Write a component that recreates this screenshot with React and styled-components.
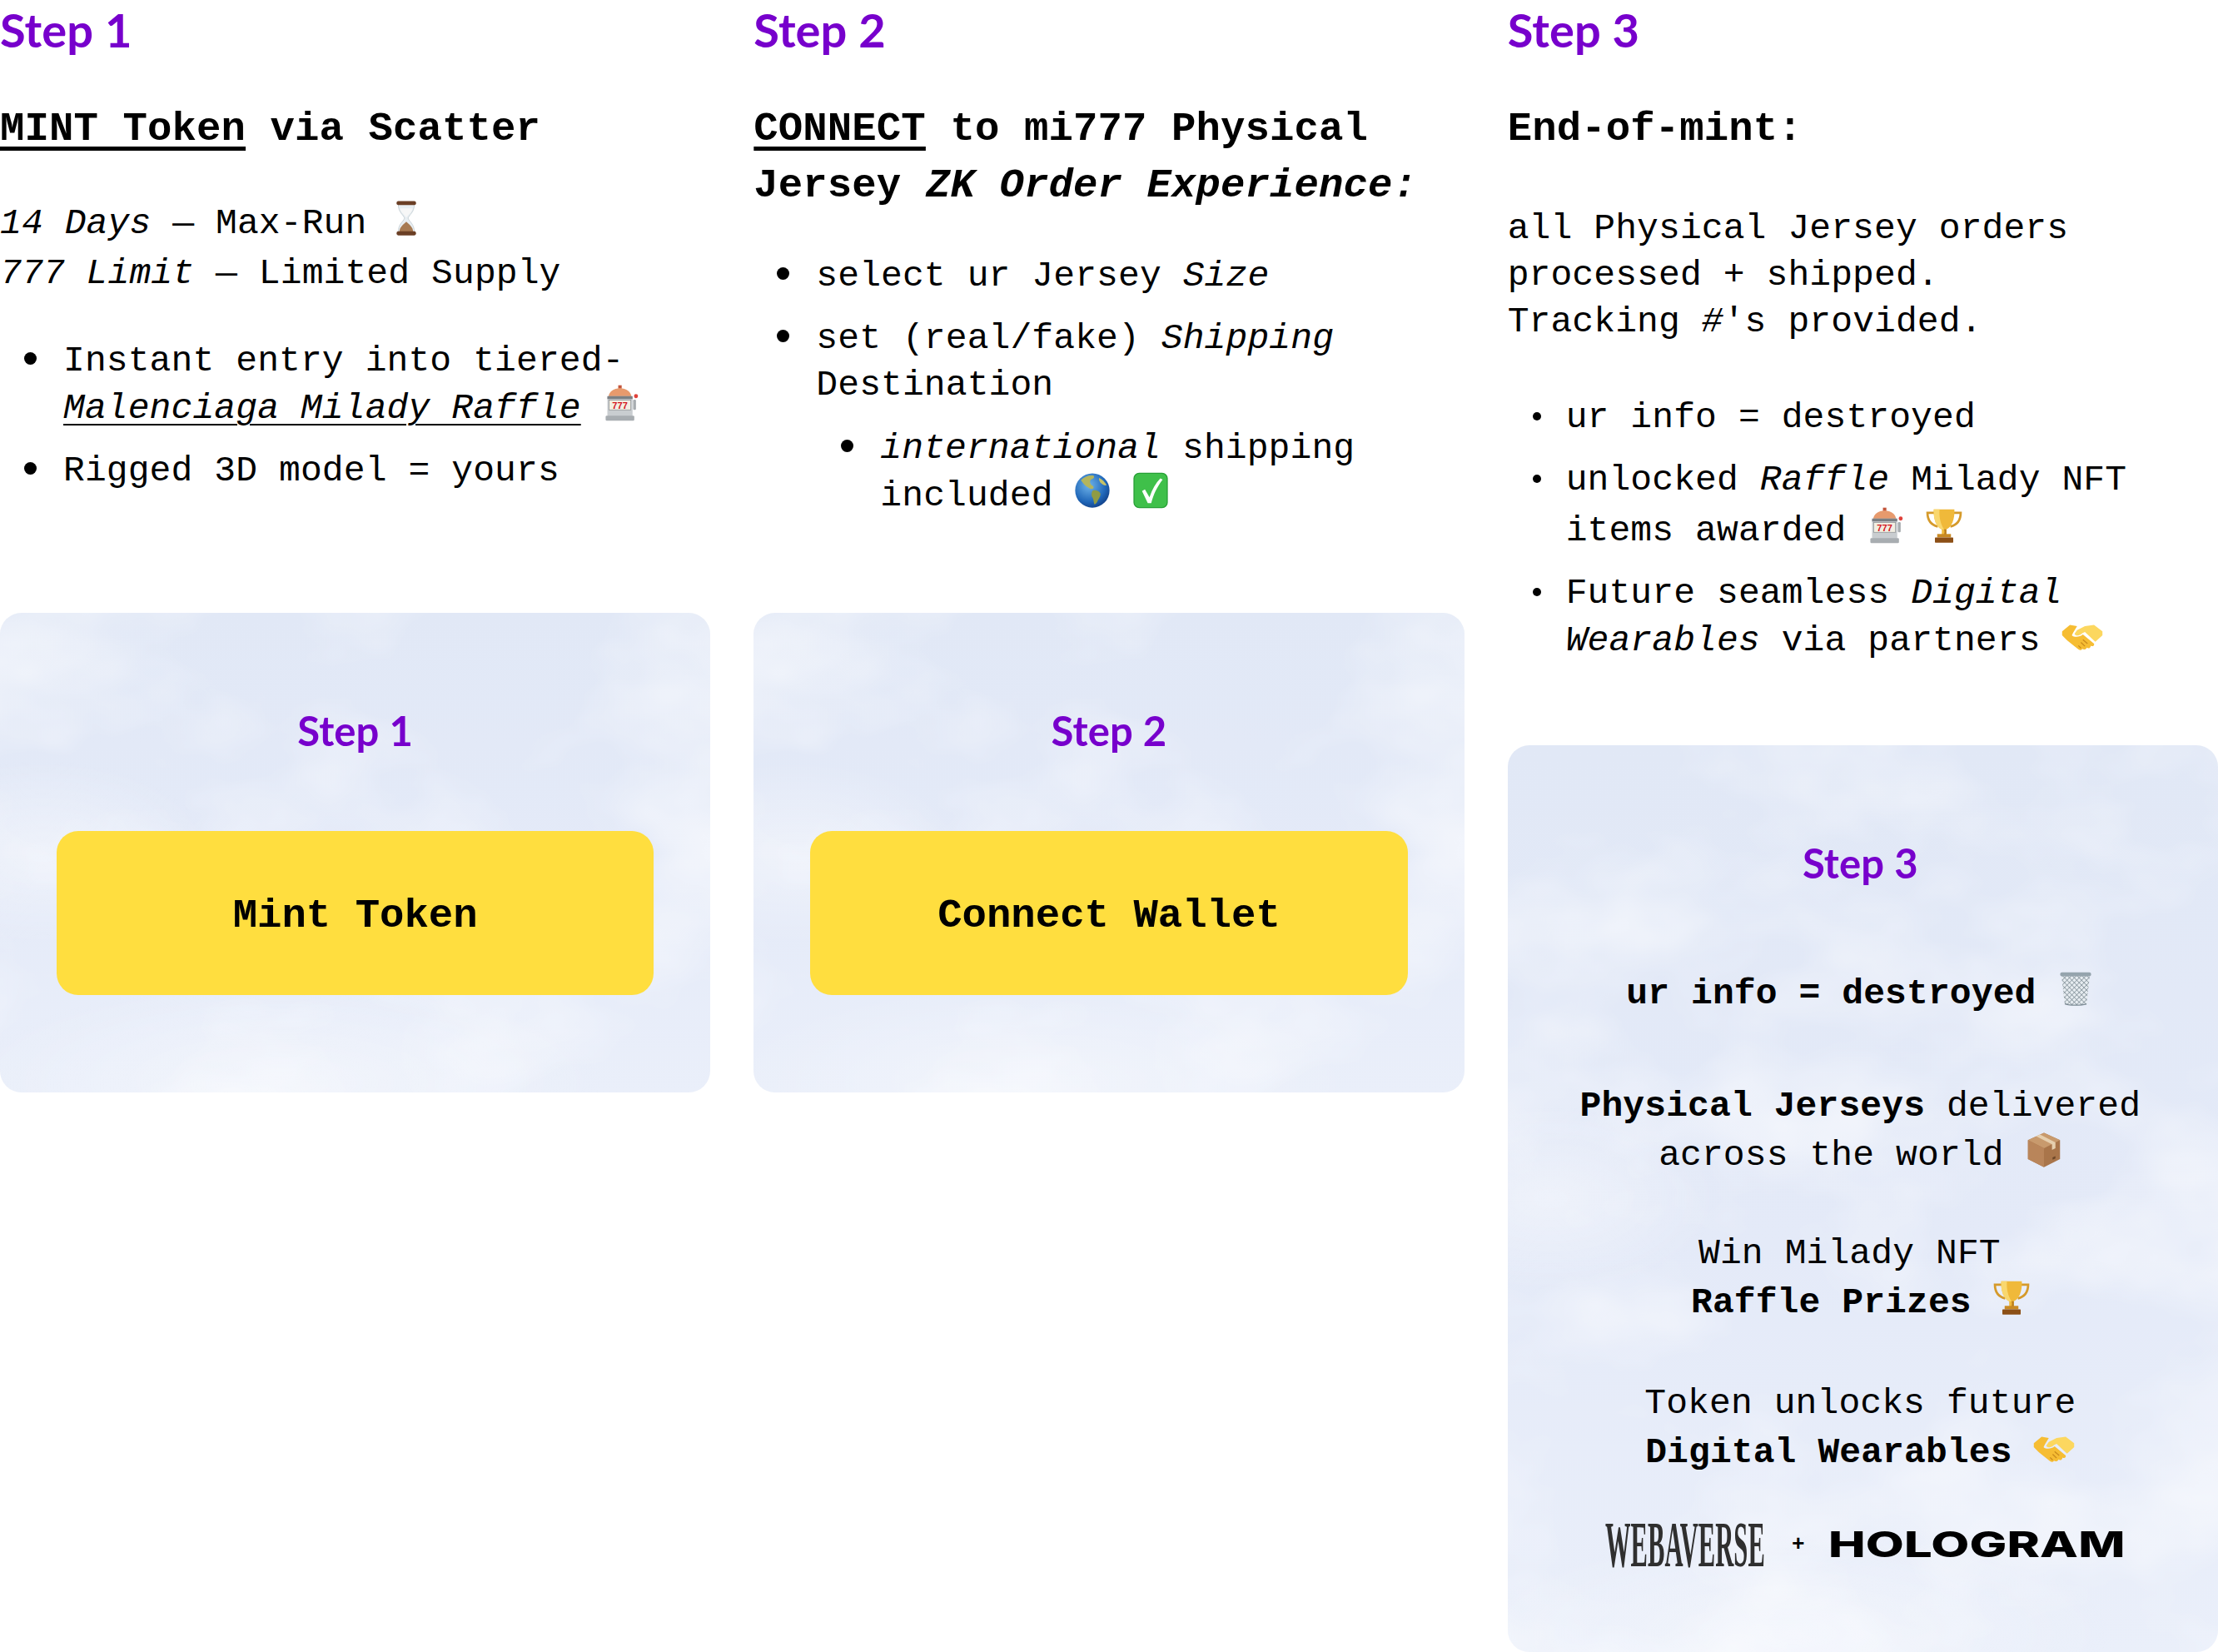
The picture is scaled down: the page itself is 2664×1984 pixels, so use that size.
import React from "react";
import styled, { createGlobalStyle, css } from "styled-components";

const GlobalStyle = createGlobalStyle`
  html, body {
    margin: 0;
    padding: 0;
    background: #ffffff;
  }
  body {
    font-family: "Liberation Mono", "DejaVu Sans Mono", monospace;
    color: #000000;
    letter-spacing: 0.1px;
  }
`;

const clouds = css`
  background-color: #e4eaf7;
  background-image:
    radial-gradient(ellipse 200px 110px at 6% 50%, rgba(255, 255, 255, 0.4), transparent),
    radial-gradient(ellipse 380px 120px at 40% 98%, rgba(255, 255, 255, 0.4), transparent),
    linear-gradient(180deg, #e1e8f6 0%, #e4eaf8 55%, #eaeffa 100%);
`;

const Page = styled.div`
  display: grid;
  grid-template-columns: repeat(3, 1fr);
  column-gap: 52px;
  width: 2664px;
  height: 1984px;
  overflow: hidden;
`;

const Column = styled.section`
  display: flex;
  flex-direction: column;
`;

const Intro = styled.div`
  height: ${(p) => p.$height}px;
  flex: none;
`;

const StepTitle = styled.h3`
  position: relative;
  margin: 0;
  font-family: "Comic Sans MS", "Lato", sans-serif;
  font-weight: 700;
  font-size: ${(p) => (p.$small ? 49 : 56)}px;
  line-height: ${(p) => (p.$small ? 60 : 72)}px;
  color: #7700cc;
  text-align: ${(p) => (p.$center ? "center" : "left")};
`;

const Heading = styled.h2`
  margin: 49px 0 0;
  font-size: 49px;
  line-height: 68px;
  font-weight: 700;
  u {
    text-decoration-thickness: 5px;
    text-underline-offset: 8px;
  }
`;

const Body = styled.p`
  margin: ${(p) => p.$top}px 0 0;
  font-size: 43px;
  line-height: ${(p) => p.$line || 56}px;
`;

const List = styled.ul`
  margin: ${(p) => p.$top || 0}px 0 0;
  padding: 0 0 0 ${(p) => p.$indent || 76}px;
  list-style: none;
  font-size: 43px;
  line-height: 56px;
  > li {
    position: relative;
    margin-top: 19px;
  }
  > li::before {
    content: "";
    position: absolute;
    left: ${(p) => (p.$smallDots ? -40 : -47)}px;
    top: ${(p) => (p.$smallDots ? 21 : 17)}px;
    width: ${(p) => (p.$smallDots ? 10 : 15)}px;
    height: ${(p) => (p.$smallDots ? 10 : 15)}px;
    border-radius: 50%;
    background: #000000;
  }
  u {
    text-decoration-thickness: 2px;
    text-underline-offset: 7px;
  }
`;

const SubList = styled(List)`
  padding-left: 77px;
  > li {
    margin-top: 20px;
  }
`;

const Card = styled.div`
  ${clouds}
  position: relative;
  overflow: hidden;
  border-radius: 26px;
  box-sizing: border-box;
  flex: 1;
  padding: ${(p) => p.$pad || "111px 68px 117px"};
  display: flex;
  flex-direction: column;
`;

const ShortCard = styled(Card)`
  flex: none;
  height: 576px;
`;

const CloudSvg = styled.svg`
  position: absolute;
  inset: 0;
  width: 100%;
  height: 100%;
`;

const MintButton = styled.button`
  position: relative;
  margin-top: 91px;
  padding: 6px 0 0;
  height: 197px;
  width: 100%;
  border: 0;
  border-radius: 26px;
  background: #ffde3f;
  color: #000000;
  font-family: "Liberation Mono", monospace;
  font-size: 49px;
  font-weight: 700;
`;

const Note = styled.p`
  position: relative;
  margin: ${(p) => p.$top}px 0 0;
  text-align: center;
  font-size: 43px;
  line-height: 59px;
`;

const Logos = styled.div`
  position: relative;
  display: flex;
  align-items: center;
  justify-content: center;
  margin: 51px 0 0 6px;
  height: 60px;
`;

const Webaverse = styled.span`
  display: block;
  width: 188px;
  font-family: "Liberation Serif", serif;
  font-weight: 700;
  font-size: 78px;
  line-height: 60px;
  color: #2f2f2f;
  white-space: nowrap;
  transform: scaleX(0.392);
  transform-origin: left center;
`;

const Plus = styled.span`
  font-size: 26px;
  font-weight: 700;
  margin: 0 28px 0 36px;
`;

const Hologram = styled.span`
  display: block;
  width: 351px;
  font-family: "Inter", sans-serif;
  font-weight: 800;
  font-size: 42px;
  line-height: 60px;
  color: #000000;
  white-space: nowrap;
  transform: scaleX(1.42);
  transform-origin: left center;
`;

const EmojiSvg = styled.svg`
  display: inline-block;
  width: ${(p) => p.$size || 44}px;
  height: ${(p) => p.$size || 44}px;
  vertical-align: ${(p) => p.$drop || -4}px;
  margin-top: ${(p) => p.$lift || 0}px;
`;

const Clouds = ({ seed }) => (
  <CloudSvg aria-hidden="true">
    <filter id={`cloud${seed}`} x="0" y="0" width="100%" height="100%">
      <feTurbulence type="fractalNoise" baseFrequency="0.004 0.006" numOctaves="4" seed={seed} />
      <feColorMatrix values="0 0 0 0 1  0 0 0 0 1  0 0 0 0 1  1.3 0 0 0 -0.58" />
    </filter>
    <rect width="100%" height="100%" filter={`url(#cloud${seed})`} />
  </CloudSvg>
);

const Hourglass = () => (
  <EmojiSvg viewBox="0 0 64 64">
    <path d="M18 8h28c0 14-9 18-11 24 2 6 11 10 11 24H18c0-14 9-18 11-24-2-6-11-10-11-24z" fill="#e8eef2" stroke="#b9c3c9" strokeWidth="1" />
    <path d="M21 15h22c-2 8-8 11-11 16-3-5-9-8-11-16z" fill="#f7f7f7" />
    <path d="M20 56c0-9 7-13 12-18 5 5 12 9 12 18z" fill="#a77a52" />
    <rect x="15" y="2" width="34" height="7" rx="3" fill="#6b3f25" />
    <rect x="15" y="55" width="34" height="7" rx="3" fill="#6b3f25" />
  </EmojiSvg>
);

const Slot = ({ lift }) => (
  <EmojiSvg viewBox="0 0 64 64" $lift={lift}>
    <rect x="27" y="1" width="6" height="6" fill="#c4553a" />
    <path d="M10 22c0-10 9-16 20-16s20 6 20 16z" fill="#e79a6d" />
    <rect x="8" y="20" width="44" height="36" rx="3" fill="#c9cdd0" />
    <rect x="8" y="20" width="44" height="5" fill="#7b7f83" />
    <rect x="11" y="27" width="38" height="17" fill="#f3efe2" stroke="#8a8d90" strokeWidth="1" />
    <text x="30" y="42" textAnchor="middle" fontFamily="Liberation Sans" fontWeight="700" fontSize="16" fill="#d3141c">777</text>
    <rect x="5" y="54" width="50" height="9" rx="2" fill="#a8adb1" />
    <rect x="53" y="26" width="5" height="18" rx="2" fill="#a8adb1" />
    <circle cx="58" cy="20" r="3.5" fill="#e0413a" />
  </EmojiSvg>
);

const Globe = () => (
  <EmojiSvg viewBox="0 0 64 64">
    <defs>
      <radialGradient id="sea" cx="40%" cy="35%" r="70%">
        <stop offset="0%" stopColor="#6fb4ea" />
        <stop offset="70%" stopColor="#1f66b8" />
        <stop offset="100%" stopColor="#123f86" />
      </radialGradient>
    </defs>
    <circle cx="32" cy="32" r="30" fill="url(#sea)" />
    <path d="M12 14c6-6 14-9 22-8 3 3-1 6-5 7-2 4-1 7 1 9 3 2 5 3 4 6-3 3-6 1-9-1-5-3-9-7-13-13z" fill="#b4b55c" />
    <path d="M33 32c5-1 11 1 13 5 1 5-3 9-5 14-2 4-5 7-6 4-1-6-1-9-4-13-1-4 0-8 2-10z" fill="#8f9b45" />
    <path d="M44 10c5 2 10 7 13 13-4 1-8-2-11-5-2-3-3-6-2-8z" fill="#c6c268" />
  </EmojiSvg>
);

const Check = () => (
  <EmojiSvg viewBox="0 0 64 64">
    <rect x="3" y="2" width="58" height="60" rx="9" fill="#3fc04a" />
    <rect x="3" y="2" width="58" height="60" rx="9" fill="none" stroke="#27a035" strokeWidth="2" />
    <path d="M17 33l5-3 8 14C35 30 41 19 49 11l4 2C43 26 37 39 33 54h-6z" fill="#ffffff" />
  </EmojiSvg>
);

const Trophy = () => (
  <EmojiSvg viewBox="0 0 64 64">
    <path d="M16 10H3c0 13 7 21 18 24M48 10h13c0 13-7 21-18 24" fill="none" stroke="#d59a2b" strokeWidth="4" />
    <path d="M14 4h36c1 18-5 31-14 35v9h-8v-9C19 35 13 22 14 4z" fill="#f0b93a" />
    <path d="M14 4h10c-1 14 2 26 8 35h-4C19 35 13 22 14 4z" fill="#f9d76e" />
    <path d="M36 39v9h-4c1-3 1-6 0-9z" fill="#b97c1e" />
    <rect x="20" y="47" width="24" height="6" fill="#c98a24" />
    <rect x="16" y="53" width="32" height="9" rx="1" fill="#8c4f16" />
  </EmojiSvg>
);

const Handshake = () => (
  <EmojiSvg viewBox="0 0 64 64" $size={50} $drop={-10}>
    <path d="M1 22L13 12l11 2-6 10-2 4c4 4 12 3 17-1l17 14c1 3-2 5-5 3 0 4-4 5-6 3-1 3-5 4-7 2-2 3-5 2-7 0L9 36 1 28z" fill="#f6bd33" />
    <path d="M63 22L50 12l-14 2-12 6-4 6c2 4 8 3 12-1l4-2 16 15 11-10z" fill="#fcd75f" />
    <path d="M36 45l-6-6M40 41l-7-6M30 48l-4-4" fill="none" stroke="#c98a1c" strokeWidth="1.6" />
  </EmojiSvg>
);

const Basket = () => (
  <EmojiSvg viewBox="0 0 64 64">
    <defs>
      <pattern id="mesh" width="6" height="6" patternUnits="userSpaceOnUse" patternTransform="rotate(45)">
        <rect width="6" height="6" fill="#e6ecf0" />
        <path d="M0 0h6M0 0v6" stroke="#74838d" strokeWidth="1.8" />
      </pattern>
    </defs>
    <path d="M7 8h50l-6 52c-1 2-37 2-38 0z" fill="url(#mesh)" />
    <rect x="5" y="4" width="54" height="7" rx="3" fill="#95a4ad" />
    <path d="M13 58c8 3 30 3 38 0v2c-8 3-30 3-38 0z" fill="#7b8a94" />
  </EmojiSvg>
);

const Package = () => (
  <EmojiSvg viewBox="0 0 64 64">
    <path d="M32 2l28 13v33L32 62 4 48V15z" fill="#a9754a" />
    <path d="M32 2l28 13-28 14L4 15z" fill="#c89a6d" />
    <path d="M4 15l28 14v33L4 48z" fill="#b9855a" />
    <path d="M18 8l28 14v10l6-3V19L25 5z" fill="#e6cfae" />
    <path d="M47 45l5-2v4l-5 2z" fill="#6d4628" />
  </EmojiSvg>
);

export default function App() {
  return (
    <>
      <GlobalStyle />
      <Page>
        <Column>
          <Intro $height={736}>
            <StepTitle>Step 1</StepTitle>
            <Heading>
              <u>MINT Token</u> via Scatter
            </Heading>
            <Body $top={50} $line={60}>
              <i>14 Days</i> — Max-Run <Hourglass />
              <br />
              <i>777 Limit</i> — Limited Supply
            </Body>
            <List $top={47}>
              <li>
                Instant entry into tiered-
                <br />
                <u>
                  <i>Malenciaga Milady Raffle</i>
                </u>{" "}
                <Slot />
              </li>
              <li>Rigged 3D model = yours</li>
            </List>
          </Intro>
          <ShortCard>
            <Clouds seed={4} />
            <StepTitle $small $center>
              Step 1
            </StepTitle>
            <MintButton>Mint Token</MintButton>
          </ShortCard>
        </Column>

        <Column>
          <Intro $height={736}>
            <StepTitle>Step 2</StepTitle>
            <Heading>
              <u>CONNECT</u> to mi777 Physical
              <br />
              Jersey <i>ZK Order Experience:</i>
            </Heading>
            <List $top={47} $indent={75}>
              <li>
                select ur Jersey <i>Size</i>
              </li>
              <li>
                set (real/fake) <i>Shipping</i>
                <br />
                Destination
                <SubList>
                  <li>
                    <i>international</i> shipping
                    <br />
                    included <Globe /> <Check />
                  </li>
                </SubList>
              </li>
            </List>
          </Intro>
          <ShortCard>
            <Clouds seed={4} />
            <StepTitle $small $center>
              Step 2
            </StepTitle>
            <MintButton>Connect Wallet</MintButton>
          </ShortCard>
        </Column>

        <Column>
          <Intro $height={895}>
            <StepTitle>Step 3</StepTitle>
            <Heading>End-of-mint:</Heading>
            <Body $top={58}>
              all Physical Jersey orders
              <br />
              processed + shipped.
              <br />
              Tracking <i>#</i>'s provided.
            </Body>
            <List $top={59} $indent={70} $smallDots>
              <li>ur info = destroyed</li>
              <li>
                unlocked <i>Raffle</i> Milady NFT
                <br />
                items awarded <Slot lift={4} /> <Trophy />
              </li>
              <li>
                Future seamless <i>Digital</i>
                <br />
                <i>Wearables</i> via partners <Handshake />
              </li>
            </List>
          </Intro>
          <Card $pad="111px 46px 0 40px">
            <Clouds seed={9} />
            <StepTitle $small $center>
              Step 3
            </StepTitle>
            <Note $top={98}>
              <b>ur info = destroyed</b> <Basket />
            </Note>
            <Note $top={76}>
              <b>Physical Jerseys</b> delivered
              <br />
              across the world <Package />
            </Note>
            <Note $top={59}>
              Win Milady NFT&nbsp;
              <br />
              <b>Raffle Prizes</b> <Trophy />
            </Note>
            <Note $top={62}>
              Token unlocks future
              <br />
              <b>Digital Wearables</b> <Handshake />
            </Note>
            <Logos>
              <Webaverse>WEBAVERSE</Webaverse>
              <Plus>+</Plus>
              <Hologram>HOLOGRAM</Hologram>
            </Logos>
          </Card>
        </Column>
      </Page>
    </>
  );
}
